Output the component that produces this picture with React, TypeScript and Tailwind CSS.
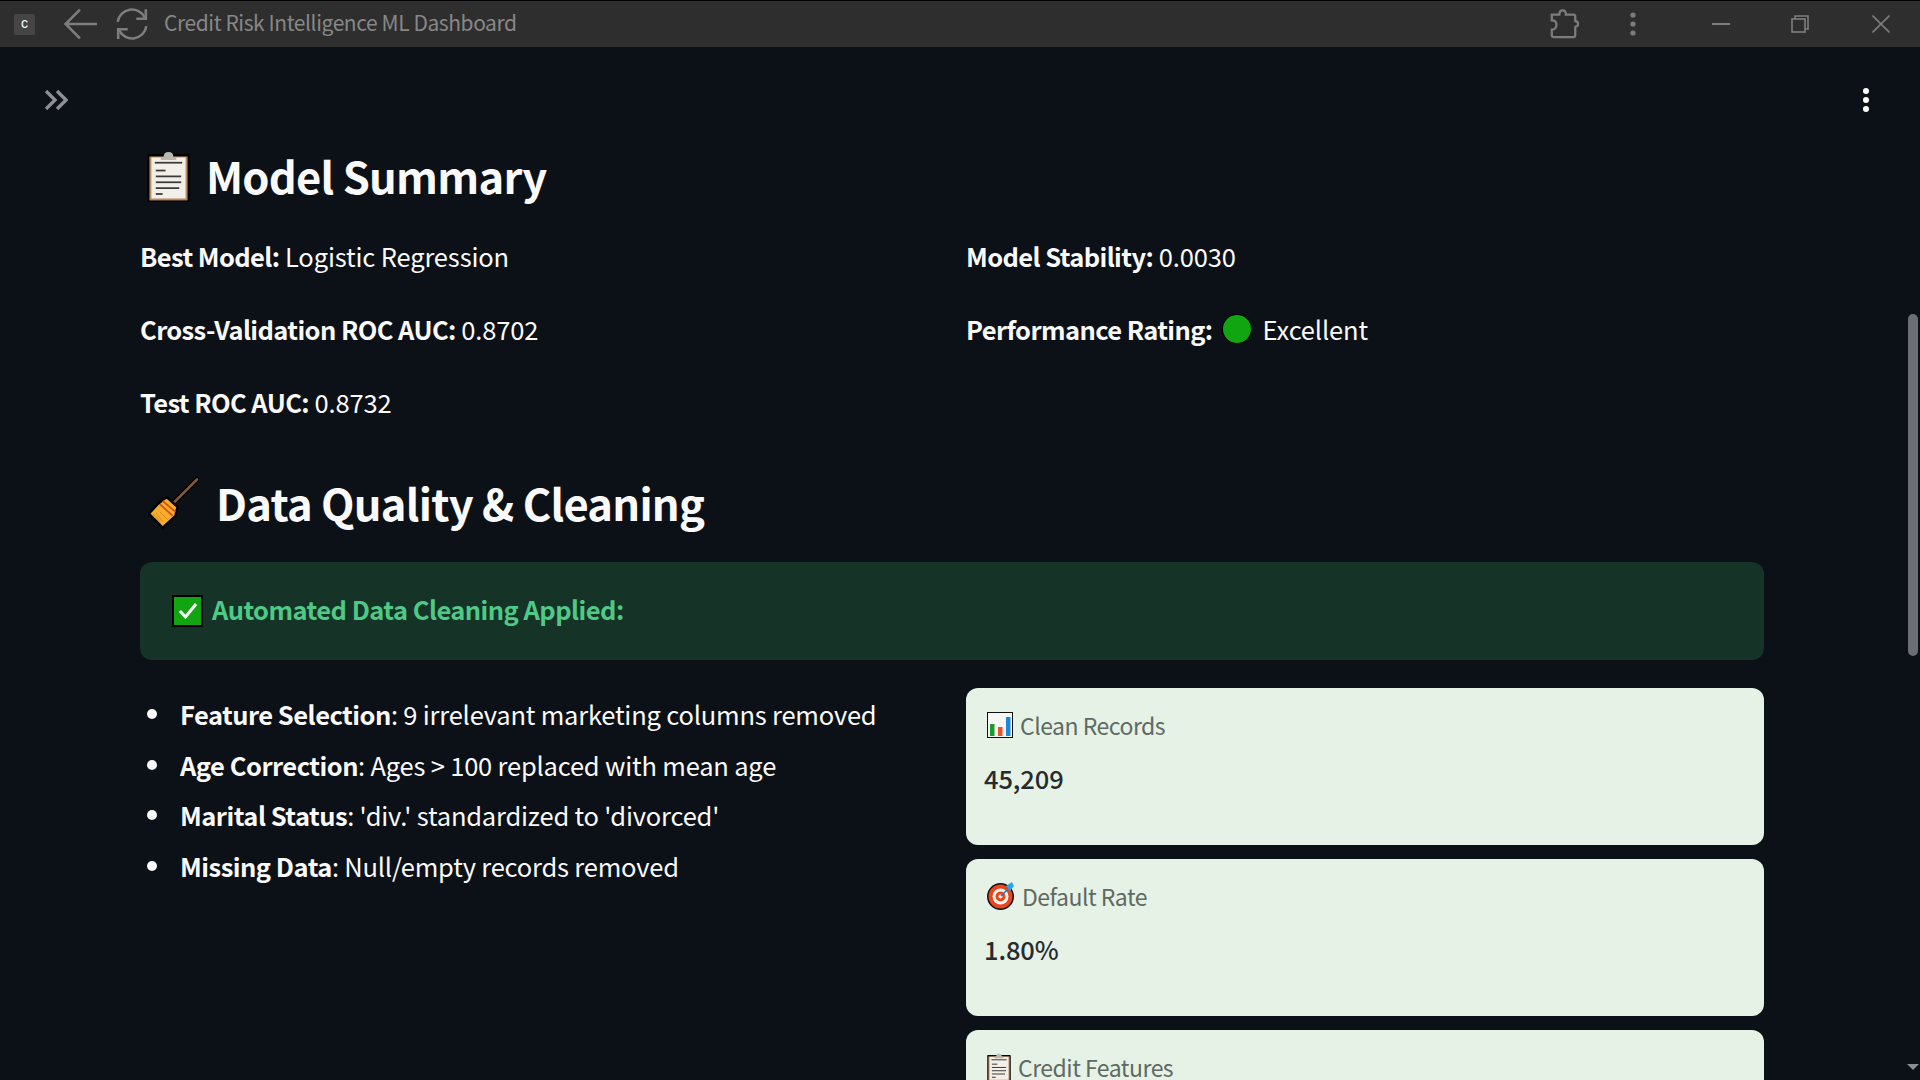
import type { ReactNode } from "react";

const ClipboardEmoji = ({ className }: { className: string }) => (
  <svg viewBox="0 0 44 52" className={className}>
    <rect x="0.5" y="3" width="43" height="49" rx="1.5" fill="#000" />
    <rect x="2.5" y="5.5" width="39" height="45" fill="#b98a5e" />
    <rect x="4.5" y="6.5" width="35" height="42" fill="#f1efe8" />
    <path d="M17 6 Q17 1 22 1 Q27 1 27 6 L30 6 L30 9 L14 9 L14 6 Z" fill="#b9b9b0" />
    <g fill="#3a3a3a">
      <rect x="8" y="11" width="28" height="1.8" />
      <rect x="9" y="19" width="10" height="1.8" />
      <rect x="9" y="25" width="26" height="1.8" />
      <rect x="9" y="31" width="26" height="1.8" />
      <rect x="9" y="37" width="24" height="1.8" />
      <rect x="9" y="43" width="7" height="1.8" />
    </g>
  </svg>
);

const BroomEmoji = () => (
  <svg viewBox="0 0 52 52" className="w-[51px] h-[52px] shrink-0">
    <path d="M50 2 L24 28" stroke="#000" strokeWidth="5" strokeLinecap="round" />
    <path d="M50 2 L24 28" stroke="#8a5a34" strokeWidth="2.6" strokeLinecap="round" />
    <path d="M19 20 L30 30 L28 39 L15 51 L1 37 L10 27 Z" fill="#f7ad2b" stroke="#000" strokeWidth="2.4" strokeLinejoin="round" />
    <path d="M15 24 L28 35 M12 27 L25 39" stroke="#d2521f" strokeWidth="1.8" />
    <path d="M8 36 L15 45 M5 37 L12 45 M12 35 L20 43" stroke="#d98a14" strokeWidth="1" />
  </svg>
);

const CheckEmoji = () => (
  <svg viewBox="0 0 31 32" className="w-[31px] h-[32px] shrink-0">
    <rect width="31" height="32" fill="#000" />
    <rect x="2" y="2" width="27" height="28" fill="#12a512" />
    <path d="M8 16 L13.5 22 L24 9" fill="none" stroke="#fff" strokeWidth="3" />
  </svg>
);

const ChartEmoji = () => (
  <svg viewBox="0 0 26 26" className="w-[26px] h-[26px] shrink-0">
    <rect x="0.5" y="0.5" width="25" height="25" fill="#f6f6f6" stroke="#111" />
    <rect x="3" y="12" width="4.5" height="12" fill="#1c9a2c" />
    <rect x="11" y="15" width="4.5" height="9" fill="#e8532b" />
    <rect x="19" y="5" width="4.5" height="19" fill="#1e88d8" />
  </svg>
);

const TargetEmoji = () => (
  <svg viewBox="0 0 28 28" className="w-[28px] h-[28px] shrink-0">
    <circle cx="13.5" cy="14.5" r="13.5" fill="#111" />
    <circle cx="13.5" cy="14.5" r="12" fill="#e8461f" />
    <circle cx="13.5" cy="14.5" r="8" fill="#f6f6f0" />
    <circle cx="13.5" cy="14.5" r="5" fill="#e8461f" />
    <circle cx="13.5" cy="14.5" r="2" fill="#f6f6f0" />
    <path d="M14 14 L23 5" stroke="#1c7fc9" strokeWidth="1.6" />
    <path d="M19 4 L25 0 L27 4 L23 9 Z" fill="#2aa5ea" />
  </svg>
);

const GreenDot = () => (
  <svg viewBox="0 0 30 30" className="w-[30px] h-[30px] shrink-0">
    <circle cx="15" cy="15" r="15" fill="#000" />
    <circle cx="15" cy="15" r="14" fill="#12a512" />
  </svg>
);

const BarIcon = ({ className, children }: { className: string; children: ReactNode }) => (
  <svg viewBox="0 0 32 32" fill="none" stroke="#7d7d7d" strokeWidth="2.4" className={className}>
    {children}
  </svg>
);

function TitleBar() {
  return (
    <div className="h-[47px] shrink-0 flex items-center bg-[#2e2e2e] border-t border-black pl-[14px] text-[#878787]">
      <div className="w-[21px] h-[21px] rounded-[2px] bg-[#454545] text-white text-[14px] leading-[19px] text-center font-['Liberation_Sans',sans-serif]">c</div>
      <BarIcon className="w-[34px] h-[34px] ml-[29px]">
        <path d="M31 16 H2 M15 2.5 L1.5 16 L15 29.5" />
      </BarIcon>
      <BarIcon className="w-[34px] h-[34px] ml-[17px]">
        <path d="M2.5 14 A13.5 13.5 0 0 1 28 10 M29.5 18 A13.5 13.5 0 0 1 4 22" />
        <path d="M29 2 V11 H20 M3 30 V21 H12" />
      </BarIcon>
      <span className="ml-[15px] -mt-[3px] text-[21px] tracking-[-0.42px] text-[#878787]">Credit Risk Intelligence ML Dashboard</span>
      <BarIcon className="w-[30px] h-[30px] ml-auto">
        <path d="M3 6 H11 Q11 1.5 14.5 1.5 Q18 1.5 18 6 H26 Q28 6 28 8 V13 Q31 13 31 16 Q31 19 28 19 V28 Q28 30 26 30 H5 Q3 30 3 28 V22 Q8 22 8 16.5 Q8 12 3 12 Z" />
      </BarIcon>
      <svg viewBox="0 0 6 24" className="w-[6px] h-[24px] ml-[51px]" fill="#7d7d7d">
        <circle cx="3" cy="3" r="2.6" />
        <circle cx="3" cy="12" r="2.6" />
        <circle cx="3" cy="21" r="2.6" />
      </svg>
      <div className="w-[18px] h-[2px] bg-[#7d7d7d] ml-[76px]" />
      <svg viewBox="0 0 18 18" className="w-[18px] h-[18px] ml-[61px]" fill="none" stroke="#7d7d7d" strokeWidth="1.6">
        <rect x="1" y="4" width="13" height="13" />
        <path d="M4 4 V1 H17 V14 H14" />
      </svg>
      <svg viewBox="0 0 18 18" className="w-[18px] h-[18px] ml-[63px] mr-[30px]" fill="none" stroke="#7d7d7d" strokeWidth="1.6">
        <path d="M0.5 0.5 L17.5 17.5 M17.5 0.5 L0.5 17.5" />
      </svg>
    </div>
  );
}

const summaryLeft = [
  ["Best Model:", "Logistic Regression"],
  ["Cross-Validation ROC AUC:", "0.8702"],
  ["Test ROC AUC:", "0.8732"],
];

const bullets = [
  ["Feature Selection", ": 9 irrelevant marketing columns removed"],
  ["Age Correction", ": Ages > 100 replaced with mean age"],
  ["Marital Status", ": 'div.' standardized to 'divorced'"],
  ["Missing Data", ": Null/empty records removed"],
];

function MetricCard({ icon, label, value }: { icon: ReactNode; label: string; value?: string }) {
  return (
    <div className="h-[157px] shrink-0 rounded-[12px] bg-[#e7f2e7] pl-[18px] pt-[22px]">
      <div className="h-[30px] flex items-center gap-[7px] pl-[3px] text-[23px] tracking-[-0.5px] text-[#5e6a63]">
        {icon}
        <span>{label}</span>
      </div>
      {value && <div className="mt-[20px] text-[25.5px] leading-[36px] font-medium tracking-[-0.1px] text-[#262b30]">{value}</div>}
    </div>
  );
}

export default function App() {
  return (
    <div className="relative w-[1920px] h-[1080px] overflow-hidden flex flex-col bg-[#0c1017] text-[#fafafa] font-['Noto_Sans_CJK_SC','Source_Sans_Pro',sans-serif]">
      <TitleBar />

      <svg viewBox="0 0 24 20" className="absolute left-[44px] top-[90px] w-[24px] h-[20px]" fill="none" stroke="#8c8f94" strokeWidth="3.4">
        <path d="M2 1 L11 10 L2 19 M13 1 L22 10 L13 19" />
      </svg>
      <svg viewBox="0 0 6 24" className="absolute left-[1863px] top-[88px] w-[6px] h-[24px]" fill="#fff">
        <circle cx="3" cy="3" r="3" />
        <circle cx="3" cy="12" r="3" />
        <circle cx="3" cy="21" r="3" />
      </svg>
      <div className="absolute left-[1908px] top-[314px] w-[10px] h-[342px] rounded-[5px] bg-[#6b6e76]" />
      <div className="absolute left-[1907px] top-[1064px] w-0 h-0 border-x-[6px] border-x-transparent border-t-[6px] border-t-[#8a8d93]" />

      <main className="px-[140px] w-[1904px] pt-[100px]">
        <h2 className="h-[58px] flex items-center pl-[7px] gap-[16px] text-[43.5px] tracking-[-0.75px] font-semibold leading-none">
          <ClipboardEmoji className="w-[43px] h-[51px] shrink-0" />
          <span>Model Summary</span>
        </h2>

        <div className="grid grid-cols-2 gap-[28px] mt-[32px] text-[25.5px] tracking-[-0.15px] leading-[38px]">
          <div className="flex flex-col gap-[35px]">
            {summaryLeft.map(([k, v]) => (
              <p key={k}>
                <b className="font-semibold tracking-[-0.6px]">{k}</b> {v}
              </p>
            ))}
          </div>
          <div className="flex flex-col gap-[35px]">
            <p>
              <b className="font-semibold tracking-[-0.6px]">Model Stability:</b> 0.0030
            </p>
            <p className="flex items-center">
              <b className="font-semibold tracking-[-0.6px]">Performance Rating:</b>
              <span className="ml-[9px] mr-[11px]"><GreenDot /></span>
              Excellent
            </p>
          </div>
        </div>

        <h2 className="h-[58px] mt-[53px] flex items-center pl-[8px] gap-[17px] text-[43.5px] tracking-[-0.75px] font-semibold leading-none">
          <BroomEmoji />
          <span>Data Quality &amp; Cleaning</span>
        </h2>

        <div className="mt-[30px] h-[98px] rounded-[12px] bg-[#163327] flex items-center pl-[32px] gap-[9px] text-[25.5px] tracking-[-0.55px] font-semibold text-[#4fc986]">
          <CheckEmoji />
          <span className="-mt-[3px]">Automated Data Cleaning Applied:</span>
        </div>

        <div className="grid grid-cols-2 gap-[28px] mt-[28px]">
          <ul className="pt-[7px] flex flex-col gap-[12.5px] text-[25.5px] tracking-[-0.2px] leading-[38px]">
            {bullets.map(([k, v]) => (
              <li key={k} className="flex items-center">
                <span className="w-[10px] h-[10px] rounded-full bg-[#fafafa] ml-[7px] mr-[23px] shrink-0" />
                <span>
                  <b className="font-semibold tracking-[-0.5px]">{k}</b>
                  {v}
                </span>
              </li>
            ))}
          </ul>
          <div className="flex flex-col gap-[14px]">
            <MetricCard icon={<ChartEmoji />} label="Clean Records" value="45,209" />
            <MetricCard icon={<TargetEmoji />} label="Default Rate" value="1.80%" />
            <MetricCard icon={<ClipboardEmoji className="w-[24px] h-[29px] shrink-0" />} label="Credit Features" />
          </div>
        </div>
      </main>
    </div>
  );
}
